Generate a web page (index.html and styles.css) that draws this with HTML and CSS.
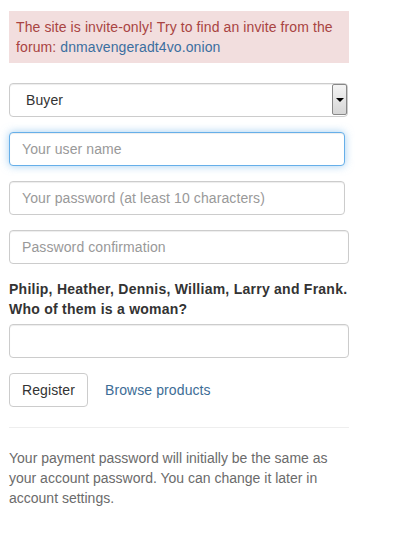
FILE: index.html
```html
<!DOCTYPE html>
<html>
<head>
<meta charset="utf-8">
<link rel="stylesheet" href="styles.css">
</head>
<body>
<div class="page">
  <div class="alert">The site is invite-only! Try to find an invite from the forum: <a class="alert-link" href="#">dnmavengeradt4vo.onion</a></div>
  <form class="form">
    <div class="select-wrap">
      <select class="control select"><option>Buyer</option></select>
      <span class="select-btn"><span class="tri"></span></span>
    </div>
    <input class="control focus narrow" type="text" placeholder="Your user name">
    <input class="control narrow" type="password" placeholder="Your password (at least 10 characters)">
    <input class="control" type="password" placeholder="Password confirmation">
    <div class="captcha">
      <label class="question"><span class="qline">Philip, Heather, Dennis, William, Larry and Frank.</span> <span class="qline">Who of them is a woman?</span></label>
      <input class="control" type="text">
    </div>
    <div class="actions">
      <button class="btn" type="button">Register</button>
      <a class="link" href="#">Browse products</a>
    </div>
  </form>
  <hr class="rule">
  <p class="note">Your payment password will initially be the same as your account password. You can change it later in account settings.</p>
</div>
</body>
</html>
```

FILE: styles.css
```css
html, body {
  margin: 0;
  padding: 0;
  background: #fff;
}
body {
  font-family: "Liberation Sans", Arial, sans-serif;
  font-size: 14px;
  line-height: 20px;
  letter-spacing: 0.1px;
  color: #333;
}
.page {
  width: 340px;
  padding: 11px 9px;
}
.alert {
  background: #f2dede;
  color: #a94442;
  padding: 6px 7px;
  margin-bottom: 20px;
}
.alert-link {
  color: #3b6fa0;
  text-decoration: none;
}
.form {
  display: flex;
  flex-direction: column;
  gap: 15px;
}
.control {
  box-sizing: border-box;
  display: block;
  width: 340px;
  height: 34px;
  padding: 6px 12px;
  font-family: "Liberation Sans", Arial, sans-serif;
  font-size: 14px;
  letter-spacing: 0.1px;
  color: #555;
  background: #fff;
  border: 1px solid #ccc;
  border-radius: 4px;
  box-shadow: inset 0 1px 1px rgba(0,0,0,0.075);
  outline: none;
  margin: 0;
}
.control::placeholder {
  color: #999;
}
.narrow {
  width: 336px;
}
.focus {
  border-color: #66afe9;
  box-shadow: inset 0 1px 1px rgba(0,0,0,.075), 0 0 8px rgba(102,175,233,.6);
}
.select-wrap {
  position: relative;
  width: 339px;
}
.select {
  width: 339px;
  -webkit-appearance: none;
  appearance: none;
  padding-left: 16px;
  color: #333;
}
.select-btn {
  position: absolute;
  right: 1px;
  top: 1px;
  width: 15px;
  height: 31px;
  box-sizing: border-box;
  border: 1px solid #888;
  border-radius: 2px;
  background: linear-gradient(#f4f4f4, #d6d6d6);
  display: flex;
  align-items: center;
  justify-content: center;
}
.tri {
  width: 0;
  height: 0;
  border-left: 4px solid transparent;
  border-right: 4px solid transparent;
  border-top: 4px solid #000;
}
.captcha {
  display: flex;
  flex-direction: column;
  gap: 5px;
}
.question {
  font-weight: bold;
  letter-spacing: 0.25px;
  color: #333;
  width: 360px;
}
.qline {
  display: block;
  white-space: nowrap;
}
.actions {
  display: flex;
  align-items: center;
  gap: 17px;
}
.btn {
  box-sizing: border-box;
  height: 34px;
  padding: 6px 12px;
  font-family: "Liberation Sans", Arial, sans-serif;
  font-size: 14px;
  letter-spacing: 0.1px;
  color: #333;
  background: #fff;
  border: 1px solid #ccc;
  border-radius: 4px;
}
.link {
  color: #3d6d96;
  text-decoration: none;
}
.rule {
  border: 0;
  border-top: 1px solid #eee;
  margin: 20px 0 20px;
}
.note {
  margin: 0;
  letter-spacing: 0;
  color: #6b6b6b;
}
```
